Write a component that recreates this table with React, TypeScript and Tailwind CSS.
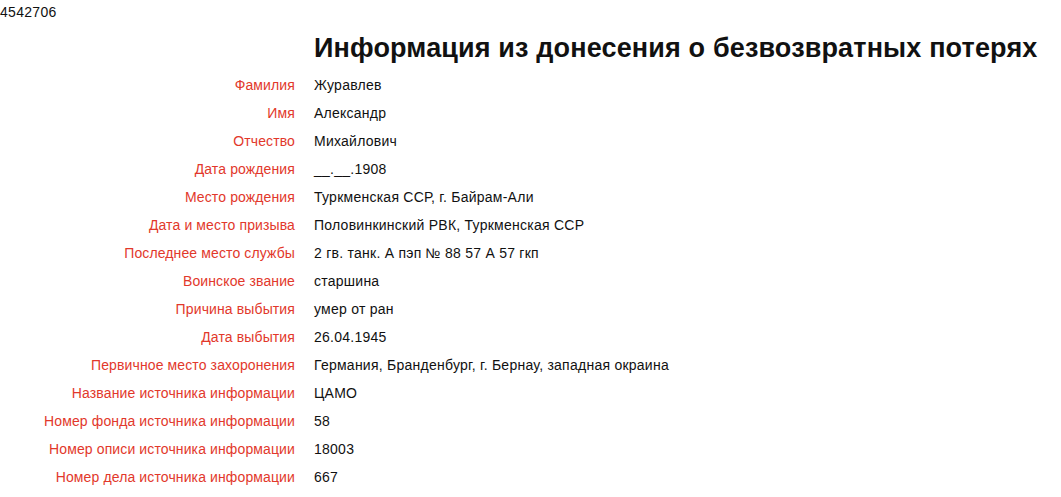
const rows: [string, string][] = [
  ['Фамилия', 'Журавлев'],
  ['Имя', 'Александр'],
  ['Отчество', 'Михайлович'],
  ['Дата рождения', '__.__.1908'],
  ['Место рождения', 'Туркменская ССР, г. Байрам-Али'],
  ['Дата и место призыва', 'Половинкинский РВК, Туркменская ССР'],
  ['Последнее место службы', '2 гв. танк. А пэп № 88 57 А 57 гкп'],
  ['Воинское звание', 'старшина'],
  ['Причина выбытия', 'умер от ран'],
  ['Дата выбытия', '26.04.1945'],
  ['Первичное место захоронения', 'Германия, Бранденбург, г. Бернау, западная окраина'],
  ['Название источника информации', 'ЦАМО'],
  ['Номер фонда источника информации', '58'],
  ['Номер описи источника информации', '18003'],
  ['Номер дела источника информации', '667'],
]

export default function App() {
  return (
    <div className="min-h-[497px] bg-white font-['Liberation_Sans',Arial,sans-serif] text-[14px] text-[#111]">
      <div className="h-[24px] pt-[4px] leading-[16px] tracking-[0.3px]">4542706</div>
      <div className="grid grid-cols-[295px_auto] gap-x-[19px]">
        <div />
        <h1 className="h-[47px] pt-[8px] text-[27px] font-bold leading-[32px] tracking-[0.15px] whitespace-nowrap text-[#111]">
          Информация из донесения о безвозвратных потерях
        </h1>
        {rows.map(([label, value]) => (
          <div key={label} className="contents">
            <div className="flex h-[28px] items-center justify-end tracking-[0.12px] text-[#e2382b]">{label}</div>
            <div className="flex h-[28px] items-center tracking-[0.25px]">{value}</div>
          </div>
        ))}
      </div>
    </div>
  )
}
